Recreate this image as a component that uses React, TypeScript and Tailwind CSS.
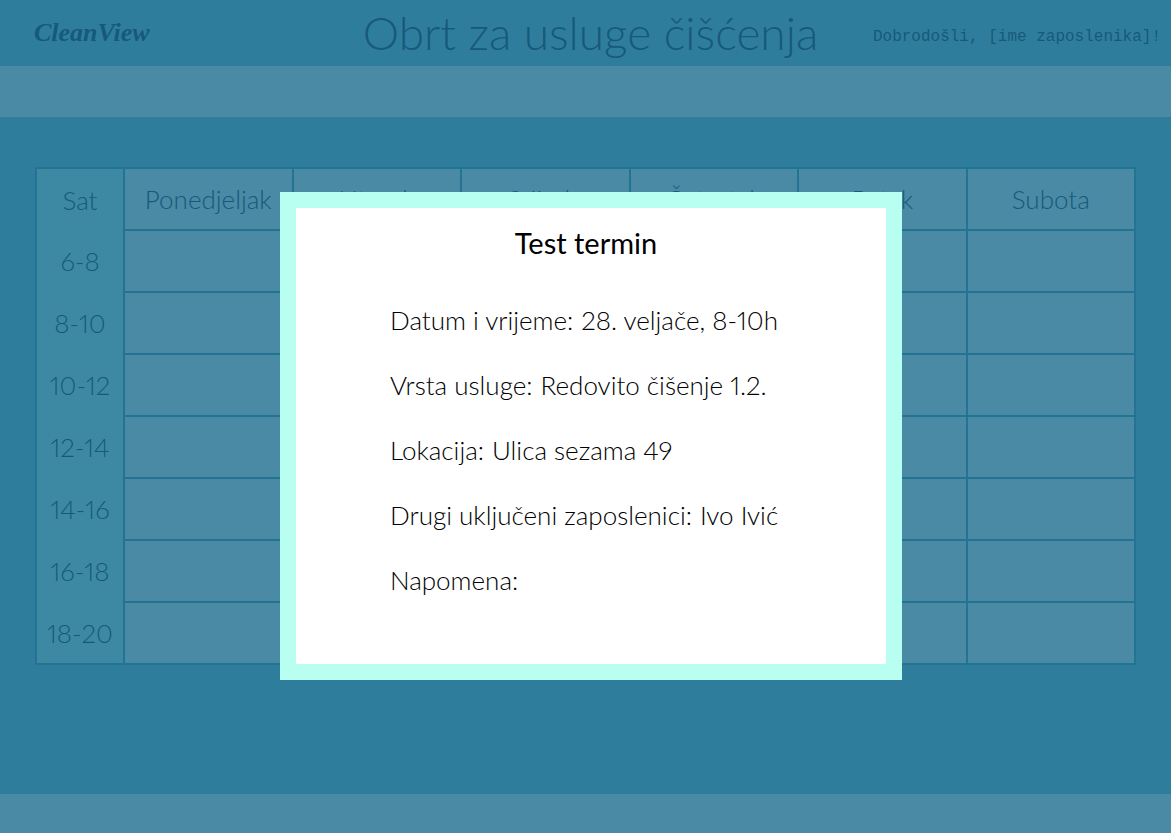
const days = ["Ponedjeljak", "Utorak", "Srijeda", "Četvrtak", "Petak", "Subota"];
const hours = ["6-8", "8-10", "10-12", "12-14", "14-16", "16-18", "18-20"];

const details = [
  { label: "Datum i vrijeme:", value: "28. veljače, 8-10h" },
  { label: "Vrsta usluge:", value: "Redovito čišenje 1.2." },
  { label: "Lokacija:", value: "Ulica sezama 49" },
  { label: "Drugi uključeni zaposlenici:", value: "Ivo Ivić" },
  { label: "Napomena:", value: "" },
];

function Header() {
  return (
    <header className="grid h-[66px] grid-cols-[1fr_auto_1fr] items-center pr-2.5 pl-5">
      <a
        href="#"
        className="pl-3.5 font-['Liberation_Serif',serif] text-[26px] leading-8 font-bold italic"
      >
        CleanView
      </a>
      <h1 className="text-[46px] leading-[60px] font-light whitespace-nowrap">
        Obrt za usluge čišćenja
      </h1>
      <p className="justify-self-end pt-2 font-['Liberation_Mono',monospace] text-base whitespace-nowrap">
        Dobrodošli, [ime zaposlenika]!
      </p>
    </header>
  );
}

function Schedule() {
  return (
    <table className="w-full table-fixed border-collapse border-2 border-[#237494] bg-[#4a8aa5] text-[26px] leading-8">
      <thead>
        <tr className="h-[62px]">
          <th scope="col" className="w-[88px] border-r-2 border-[#237494] bg-[#3d89a3] p-0 font-light">
            Sat
          </th>
          {days.map((day) => (
            <th key={day} scope="col" className="border-2 border-[#237494] p-0 font-light">
              {day}
            </th>
          ))}
        </tr>
      </thead>
      <tbody>
        {hours.map((hour) => (
          <tr key={hour} className="h-[62px]">
            <th scope="row" className="border-r-2 border-[#237494] bg-[#3d89a3] p-0 font-light proportional-nums">
              {hour}
            </th>
            {days.map((day) => (
              <td key={day} className="border-2 border-[#237494]" />
            ))}
          </tr>
        ))}
      </tbody>
    </table>
  );
}

function AppointmentDialog() {
  return (
    <div className="fixed inset-0 flex items-start justify-center overflow-auto pt-48 pl-[11px]">
      <section
        role="dialog"
        aria-labelledby="appointment-title"
        className="w-full max-w-[622px] border-16 border-[#b9fff1] bg-white pt-[15px] pb-[68px] text-black"
      >
        <h2 id="appointment-title" className="pr-2.5 text-center text-[29px] leading-10 font-normal">
          Test termin
        </h2>
        <dl className="mt-[41px] flex flex-col gap-[33px] pl-[94px] text-[26px] leading-8 font-light proportional-nums">
          {details.map(({ label, value }) => (
            <div key={label} className="flex gap-2 whitespace-nowrap">
              <dt>{label}</dt>
              <dd>{value}</dd>
            </div>
          ))}
        </dl>
      </section>
    </div>
  );
}

export default function App() {
  return (
    <div className="flex min-h-screen flex-col bg-[#2f7d9d] font-['Lato',sans-serif] text-[#17597a]">
      <Header />
      <nav className="h-[51px] bg-[#4a8aa5]" />
      <main className="flex-1 px-[35px] py-[50px]">
        <Schedule />
      </main>
      <footer className="h-[39px] bg-[#4a8aa5]" />
      <AppointmentDialog />
    </div>
  );
}
